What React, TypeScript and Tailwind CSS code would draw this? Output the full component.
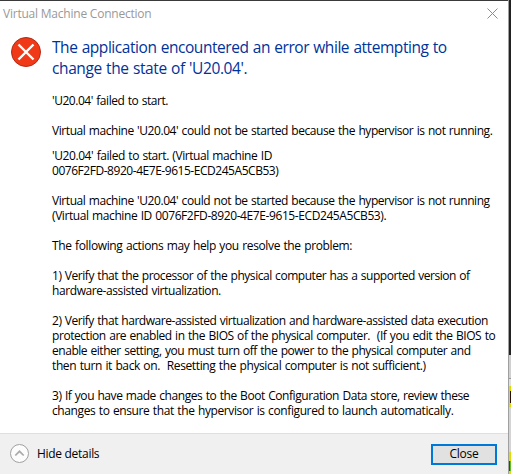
import React from "react";

type Line = { text: string; tracking: string };

const paragraphs: { gap: string; lines: Line[] }[] = [
  { gap: "mt-0", lines: [{ text: "'U20.04' failed to start.", tracking: "tracking-[-0.46px]" }] },
  { gap: "mt-[15px]", lines: [{ text: "Virtual machine 'U20.04' could not be started because the hypervisor is not running.", tracking: "tracking-[-0.435px]" }] },
  { gap: "mt-[10px]", lines: [
    { text: "'U20.04' failed to start. (Virtual machine ID", tracking: "tracking-[-0.42px]" },
    { text: "0076F2FD-8920-4E7E-9615-ECD245A5CB53)", tracking: "tracking-[-0.46px]" },
  ] },
  { gap: "mt-[15px]", lines: [
    { text: "Virtual machine 'U20.04' could not be started because the hypervisor is not running", tracking: "tracking-[-0.435px]" },
    { text: "(Virtual machine ID 0076F2FD-8920-4E7E-9615-ECD245A5CB53).", tracking: "tracking-[-0.41px]" },
  ] },
  { gap: "mt-[15px]", lines: [{ text: "The following actions may help you resolve the problem:", tracking: "tracking-[-0.37px]" }] },
  { gap: "mt-[15px]", lines: [
    { text: "1) Verify that the processor of the physical computer has a supported version of", tracking: "tracking-[-0.46px]" },
    { text: "hardware-assisted virtualization.", tracking: "tracking-[-0.41px]" },
  ] },
  { gap: "mt-[15px]", lines: [
    { text: "2) Verify that hardware-assisted virtualization and hardware-assisted data execution", tracking: "tracking-[-0.465px]" },
    { text: "protection are enabled in the BIOS of the physical computer.  (If you edit the BIOS to", tracking: "tracking-[-0.435px]" },
    { text: "enable either setting, you must turn off the power to the physical computer and", tracking: "tracking-[-0.455px]" },
    { text: "then turn it back on.  Resetting the physical computer is not sufficient.)", tracking: "tracking-[-0.385px]" },
  ] },
  { gap: "mt-[15px]", lines: [
    { text: "3) If you have made changes to the Boot Configuration Data store, review these", tracking: "tracking-[-0.44px]" },
    { text: "changes to ensure that the hypervisor is configured to launch automatically.", tracking: "tracking-[-0.39px]" },
  ] },
];

export default function App() {
  return (
    <div className="flex h-[474px] w-[511px] overflow-hidden bg-white font-['Open_Sans',sans-serif] text-[12px] text-black">
      <main className="flex w-[508px] shrink-0 flex-col border-t border-[#3a3a3a]">
        <header className="flex h-[26px] items-start justify-between pl-[3px] pr-[10px] pt-[7px] text-[#999]">
          <span className="whitespace-pre leading-[12px] tracking-[-0.22px]">Virtual Machine Connection</span>
          <svg width="11" height="11" viewBox="0 0 11 11" stroke="#8c8c8c" fill="none"><path d="M.5.5l10 10M10.5.5l-10 10" /></svg>
        </header>
        <section className="flex flex-1 gap-[11px] pl-[11px] pt-[10px]">
          <svg width="30" height="30" viewBox="0 0 30 30" className="shrink-0">
            <circle cx="15" cy="15" r="14.5" fill="#f03a17" stroke="#b12a18" />
            <path d="M7.5 7.5l15 15M22.5 7.5l-15 15" stroke="#fff" strokeWidth="2.4" />
          </svg>
          <div className="whitespace-pre">
            <h1 className="text-[15.5px] leading-[21px] text-[#003399]">
              <span className="block tracking-[-0.45px] [word-spacing:0.7px]">The application encountered an error while attempting to</span>
              <span className="block tracking-[-0.4px] [word-spacing:0.7px]">change the state of 'U20.04'.</span>
            </h1>
            <div className="mt-[14px] leading-[15px] [word-spacing:0.7px]">
              {paragraphs.map((p, i) => (
                <p key={i} className={p.gap}>
                  {p.lines.map((l) => <span key={l.text} className={"block " + l.tracking}>{l.text}</span>)}
                </p>
              ))}
            </div>
          </div>
        </section>
        <footer className="flex h-[41px] items-center border-t border-[#dfdfdf] bg-[#f0f0f0] pl-[10px] pr-[11px]">
          <svg width="19" height="19" viewBox="0 0 19 19" fill="none" className="mb-px">
            <circle cx="9.5" cy="9.5" r="9" fill="#fcfcfc" stroke="#a0a0a0" />
            <path d="M5.3 11.5l4.2-4.2 4.2 4.2" stroke="#aaa" strokeWidth="1.7" />
          </svg>
          <span className="mb-px ml-2 tracking-[-0.3px]">Hide details</span>
          <button className="ml-auto h-[21px] w-[66px] border-2 border-[#0078d7] bg-[#e1e1e1] leading-none tracking-[-0.3px]">Close</button>
        </footer>
      </main>
      <aside className="flex w-[3px] flex-col border-l border-[#a0a0a0]">
        <div className="h-[355px] bg-[#222]" />
        <div className="h-[24px] border-b border-[#999] bg-[#d0d0d0]" />
        <div className="h-[7px] bg-[#e0e0e0]" />
        <div className="flex h-[21px] items-center justify-end bg-[#dddd00]">
          <div className="h-[12px] w-px bg-[#2a1000]" />
        </div>
        <div className="h-[45px] bg-[#d4d4d4]" />
        <div className="h-[22px] bg-[#dddd00] pt-[9px]">
          <div className="flex h-[10px]">
            <div className="w-px bg-[#3c4a20]" />
            <div className="w-px bg-[#5cc020]" />
          </div>
        </div>
      </aside>
    </div>
  );
}
